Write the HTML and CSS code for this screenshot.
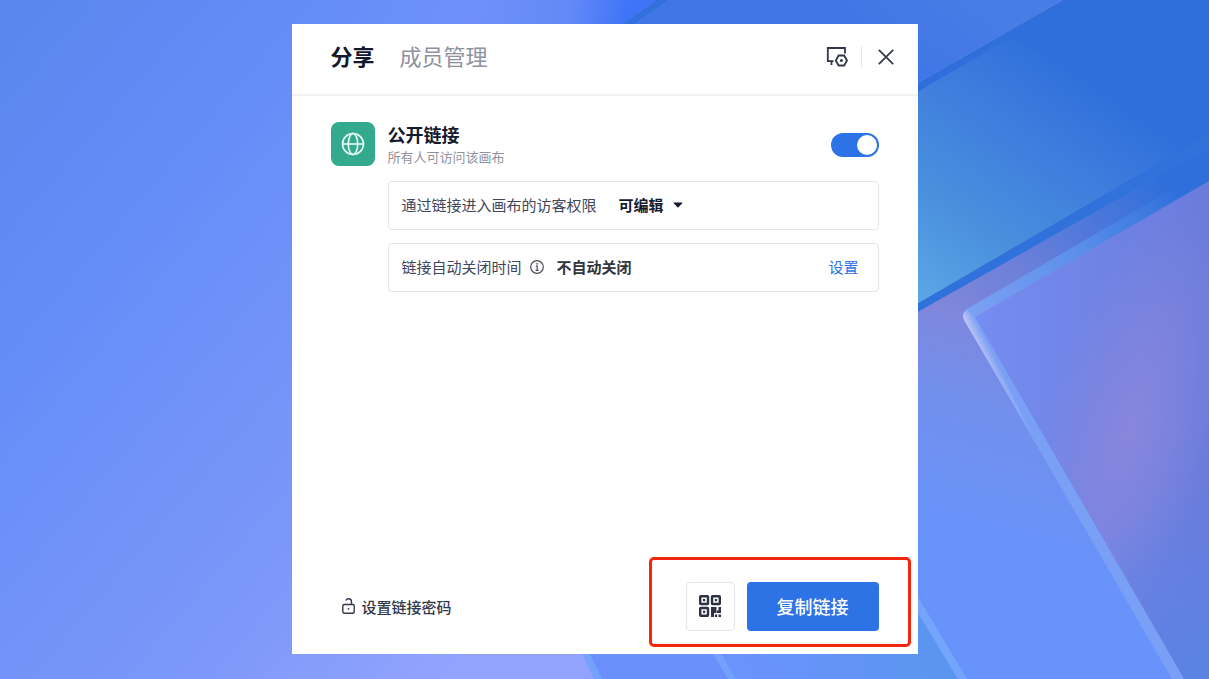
FILE: index.html
```html
<!DOCTYPE html>
<html lang="zh-CN">
<head>
  <meta charset="UTF-8" />
  <meta name="viewport" content="width=device-width, initial-scale=1.0" />
  <title>分享</title>
  <link rel="stylesheet" href="styles.css">
</head>
<body>
  <!-- Wallpaper -->
  <svg class="wallpaper" viewBox="0 0 1209 679" preserveAspectRatio="xMidYMid slice" aria-hidden="true">
    <defs>
      <linearGradient id="left" gradientUnits="userSpaceOnUse" x1="0" y1="60" x2="560" y2="540">
        <stop offset="0" stop-color="#5a87ee" />
        <stop offset=".28" stop-color="#658df8" />
        <stop offset=".72" stop-color="#7b97f9" />
        <stop offset="1" stop-color="#91a3fd" />
      </linearGradient>
      <linearGradient id="leftTop" gradientUnits="userSpaceOnUse" x1="400" y1="0" x2="625" y2="30">
        <stop offset="0" stop-color="#6e90f8" stop-opacity="0" />
        <stop offset=".35" stop-color="#6e90f8" />
        <stop offset=".75" stop-color="#6389f7" />
        <stop offset="1" stop-color="#3f74f8" />
      </linearGradient>
      <linearGradient id="top" gradientUnits="userSpaceOnUse" x1="980" y1="0" x2="920" y2="80">
        <stop offset="0" stop-color="#487de6" />
        <stop offset="1" stop-color="#4075e6" />
      </linearGradient>
      <linearGradient id="cyan" gradientUnits="userSpaceOnUse" x1="918" y1="304" x2="1080" y2="75">
        <stop offset="0" stop-color="#5ba8e6" />
        <stop offset=".35" stop-color="#4a8fdd" />
        <stop offset=".75" stop-color="#3d7bdd" />
        <stop offset="1" stop-color="#306fdb" />
      </linearGradient>
      <linearGradient id="strip" gradientUnits="userSpaceOnUse" x1="940" y1="312" x2="1165" y2="182">
        <stop offset="0" stop-color="#8187da" />
        <stop offset=".35" stop-color="#6c80d9" />
        <stop offset="1" stop-color="#2f6fdb" />
      </linearGradient>
      <linearGradient id="rim" gradientUnits="userSpaceOnUse" x1="968" y1="315" x2="1180" y2="190">
        <stop offset="0" stop-color="#7ca1f3" />
        <stop offset=".5" stop-color="#5c90ea" />
        <stop offset="1" stop-color="#2f6fdb" />
      </linearGradient>
      <linearGradient id="middle" gradientUnits="userSpaceOnUse" x1="970" y1="300" x2="910" y2="530">
        <stop offset="0" stop-color="#8187da" />
        <stop offset=".4" stop-color="#728fec" />
        <stop offset="1" stop-color="#6893fb" />
      </linearGradient>
      <linearGradient id="glass" gradientUnits="userSpaceOnUse" x1="980" y1="330" x2="1209" y2="330">
        <stop offset="0" stop-color="#758cf0" />
        <stop offset="1" stop-color="#6a7bdb" />
      </linearGradient>
      <radialGradient id="glow" gradientUnits="userSpaceOnUse" cx="0" cy="0" r="1" gradientTransform="translate(1130 430) rotate(15) scale(85 230)">
        <stop offset="0" stop-color="#8886dc" />
        <stop offset="1" stop-color="#8886dc" stop-opacity="0" />
      </radialGradient>
      <linearGradient id="glassEnd" gradientUnits="userSpaceOnUse" x1="1140" y1="510" x2="1209" y2="650">
        <stop offset="0" stop-color="#5c82e3" stop-opacity="0" />
        <stop offset="1" stop-color="#5c82e3" />
      </linearGradient>
      <linearGradient id="shine" gradientUnits="userSpaceOnUse" x1="963" y1="319" x2="973" y2="314">
        <stop offset="0" stop-color="#c3c8f6" />
        <stop offset="1" stop-color="#7ca1f3" />
      </linearGradient>
      <linearGradient id="bottom" gradientUnits="userSpaceOnUse" x1="730" y1="679" x2="930" y2="620">
        <stop offset="0" stop-color="#6c93fc" />
        <stop offset="1" stop-color="#5a95f0" />
      </linearGradient>
    </defs>

    <rect width="1209" height="679" fill="url(#left)" />
    <path d="M400 0H656L614 30H400z" fill="url(#leftTop)" />
    <path d="M656 0H669L627 30H614z" fill="#3270de" />
    <path d="M669 0H1063L900 93V30H627z" fill="url(#top)" />

    <!-- right hand bands -->
    <path d="M1063 0H1209V182L900 322V93z" fill="#306fdb" />
    <path d="M900 102L1010 38L1209 134L900 314z" fill="url(#cyan)" />
    <path d="M900 314L1209 134V182L900 322z" fill="#3071dc" />
    <path d="M900 322L1153 180L1209 160V679H900z" fill="url(#middle)" />
    <path d="M918 312L1209 148V181L966 312z" fill="url(#strip)" />
    <path d="M975 317L1209 181V679H1184z" fill="url(#glass)" />
    <path d="M975 317L1209 181V679H1184z" fill="url(#glow)" />
    <path d="M1085 500L1209 400V679H1184z" fill="url(#glassEnd)" />
    <path d="M965 310L1209 168V181L975 317z" fill="url(#rim)" />
    <path d="M1172 679L964 320Q961 313 967 310L975 317L1184 679z" fill="#7aa0f6" />
    <path d="M964 320Q961 313 967 310L975 317L981 328L1030 432z" fill="url(#shine)" />

    <!-- bottom bands -->
    <path d="M586 654H716L732 679H599z" fill="#6b90fc" />
    <path d="M716 640L900 570L965 679H732z" fill="url(#bottom)" />
    <path d="M582 654H590L602 679H594z" fill="#74a1fb" />
    <path d="M713 654H721L736 679H728z" fill="#74a1fb" />
    <path d="M910 584L918 597L967 679H958L910 600z" fill="#75a4fc" />
  </svg>

  <main class="panel">
    <header class="panel-header">
      <div class="tabs">
        <button type="button" class="tab active">分享</button>
        <button type="button" class="tab">成员管理</button>
      </div>
      <div class="header-actions">
        <button type="button" class="icon-btn" aria-label="展示设置">
          <svg width="22" height="22" viewBox="0 0 22 22" fill="none" stroke="#32374a" stroke-width="1.8">
            <path d="M19 7.500V2H1.800V15.200H7.500M5.500 15.500V19" />
            <path d="M12.600 9.500h5.600l2.800 5-2.800 5h-5.600l-2.800-5z" />
            <circle cx="15.400" cy="14.500" r="1.500" fill="#32374a" stroke="none" />
          </svg>
        </button>
        <span class="divider"></span>
        <button type="button" class="icon-btn" aria-label="关闭">
          <svg width="16" height="16" viewBox="0 0 16 16" fill="none" stroke="#32374a" stroke-width="1.7">
            <path d="M.8.8l14.400 14.400M15.200.8L.8 15.200" />
          </svg>
        </button>
      </div>
    </header>

    <section class="content">
      <span class="globe">
        <svg width="24" height="24" viewBox="0 0 24 24" fill="none" stroke="#e9fbf4" stroke-width="1.600">
          <circle cx="12" cy="12" r="10.500" />
          <ellipse cx="12" cy="12" rx="4.700" ry="10.500" />
          <path d="M1.500 12h21" />
        </svg>
      </span>

      <div class="settings">
        <div class="public-link">
          <div>
            <h1><label for="public">公开链接</label></h1>
            <p>所有人可访问该画布</p>
          </div>
          <input type="checkbox" role="switch" id="public" class="switch" checked>
        </div>

        <div class="option">
          <label for="access">通过链接进入画布的访客权限</label>
          <div class="select">
            <select id="access">
              <option selected>可编辑</option>
            </select>
            <svg width="10" height="6" viewBox="0 0 10 6"><path d="M1 .5h8q.8 0 .2.700L5.500 5.200q-.5.500-1 0L.8 1.200Q.2.500 1 .5z" fill="#141a2e" /></svg>
          </div>
        </div>

        <div class="option">
          <span>链接自动关闭时间</span>
          <svg class="info" width="14" height="14" viewBox="0 0 14 14" fill="none" stroke="#4a4d55" stroke-width="1.200">
            <circle cx="7" cy="7" r="6.300" />
            <path d="M5.800 6.200h1.400v4M5.600 10.300h3" />
            <circle cx="7" cy="3.900" r=".8" fill="#4a4d55" stroke="none" />
          </svg>
          <strong class="close-time">不自动关闭</strong>
          <a href="#" class="set-link">设置</a>
        </div>
      </div>
    </section>

    <footer class="panel-footer">
      <button type="button" class="password">
        <svg width="13" height="16" viewBox="0 0 13 16" fill="none" stroke="#32374a" stroke-width="1.400">
          <rect x=".8" y="6.500" width="11.400" height="8.700" rx="1.500" />
          <path d="M9.500 6.500V3.800Q9.500.8 6.500.8 4.500.8 3.900 2.500" />
          <circle cx="6.500" cy="10.800" r=".9" fill="#32374a" stroke="none" />
        </svg>
        设置链接密码
      </button>

      <div class="highlight">
        <button type="button" class="qr-btn" aria-label="二维码">
          <svg width="22" height="22" viewBox="0 0 22 22" fill="none" stroke="#2c3144" stroke-width="2.400">
            <rect x="1.200" y="1.200" width="7.800" height="7.800" rx=".6" />
            <rect x="13" y="1.200" width="7.800" height="7.800" rx=".6" />
            <rect x="1.200" y="13" width="7.800" height="7.800" rx=".6" />
            <path d="M4 4h2.200v2.200H4zM15.800 4H18v2.200h-2.200zM4 15.800h2.200V18H4zM12 12h5.500v6H15v4h-3zM19.500 12H22v6h-4v-2.500h1.500zM16 19.500h2.200V22H16zM19.500 19.500H22V22h-2.500z" fill="#2c3144" stroke="none" />
          </svg>
        </button>
        <button type="button" class="copy-btn">复制链接</button>
      </div>
    </footer>
  </main>
</body>
</html>
```
FILE: styles.css
```css
* {
  box-sizing: border-box;
}

body {
  min-height: 100vh;
  margin: 0;
  padding-bottom: 2px;
  font-family: "Noto Sans CJK SC", sans-serif;
  color: #141a2e;
  background: #6c90f8;
  display: flex;
  justify-content: center;
  align-items: center;
}

button, select {
  font-family: inherit;
  color: inherit;
  padding: 0;
  border: none;
  background: none;
  cursor: pointer;
}

svg {
  display: block;
  flex-shrink: 0;
}

.wallpaper {
  position: fixed;
  inset: 0;
  width: 100%;
  height: 100%;
  z-index: -1;
}

.panel {
  width: 100%;
  max-width: 626px;
  background: #fff;
}

.panel-header {
  display: flex;
  justify-content: space-between;
  align-items: center;
  padding: 17px 24px 21px 39px;
  border-bottom: 2px solid #f1f1f3;
}

.tabs {
  display: flex;
  gap: 25px;
  padding-bottom: 4px;
}

.tab {
  font-size: 22px;
  line-height: 28px;
  color: #8f929d;
}

.tab.active {
  font-weight: 700;
  color: #141a2e;
}

.header-actions {
  display: flex;
  align-items: center;
  gap: 13px;
}

.icon-btn {
  display: flex;
}

.divider {
  width: 1px;
  height: 22px;
  margin-right: 3px;
  background: #e6e7ea;
}

.content {
  display: flex;
  gap: 13px;
  min-height: 461px;
  padding: 26px 39px 0;
}

.globe {
  display: flex;
  justify-content: center;
  align-items: center;
  width: 44px;
  height: 44px;
  border-radius: 8px;
  background: #33a98d;
}

.settings {
  flex: 1;
  display: flex;
  flex-direction: column;
  gap: 13px;
}

.public-link {
  display: flex;
  justify-content: space-between;
  align-items: center;
  height: 46px;
}

h1 {
  margin: 0;
  font-size: 18px;
  line-height: 24px;
  font-weight: 700;
}

p {
  margin: 0;
  font-size: 13px;
  line-height: 22px;
  color: #8f929d;
}

.switch {
  appearance: none;
  width: 48px;
  height: 24px;
  margin: 0;
  padding: 2px;
  border-radius: 12px;
  background: #c9ccd4;
  cursor: pointer;
}

.switch::before {
  content: "";
  display: block;
  width: 20px;
  height: 20px;
  border-radius: 50%;
  background: #fff;
}

.switch:checked {
  background: #2d73e6;
}

.switch:checked::before {
  margin-left: auto;
}

.option {
  display: flex;
  align-items: center;
  height: 49px;
  padding: 0 19px 0 13px;
  border: 1px solid #e4e5e8;
  border-radius: 4px;
  font-size: 15px;
  line-height: 22px;
  color: #41465a;
}

.select {
  display: flex;
  align-items: center;
  gap: 8px;
  margin-left: 22px;
}

.select select {
  appearance: none;
  font-size: 15px;
  line-height: 22px;
  font-weight: 700;
  color: #141a2e;
}

.info {
  margin: 0 13px 0 8px;
}

.close-time {
  font-weight: 700;
  color: #33353a;
}

.set-link {
  margin-left: auto;
  color: #2d73e6;
  text-decoration: none;
}

.panel-footer {
  display: flex;
  justify-content: space-between;
  align-items: flex-end;
  padding: 0 7px 7px 50px;
}

.password {
  display: flex;
  align-items: center;
  gap: 7px;
  height: 49px;
  margin-bottom: 16px;
  font-size: 15px;
  font-weight: 500;
  color: #32374a;
}

.highlight {
  display: flex;
  gap: 12px;
  padding: 22px 29px 13px 34px;
  border: 3px solid #f5260b;
  border-radius: 5px;
}

.qr-btn {
  display: flex;
  justify-content: center;
  align-items: center;
  width: 49px;
  height: 49px;
  border: 1px solid #e4e5e8;
  border-radius: 4px;
}

.copy-btn {
  width: 132px;
  height: 49px;
  border-radius: 4px;
  font-size: 18px;
  font-weight: 500;
  color: #fff;
  background: #2d73e6;
}
```
